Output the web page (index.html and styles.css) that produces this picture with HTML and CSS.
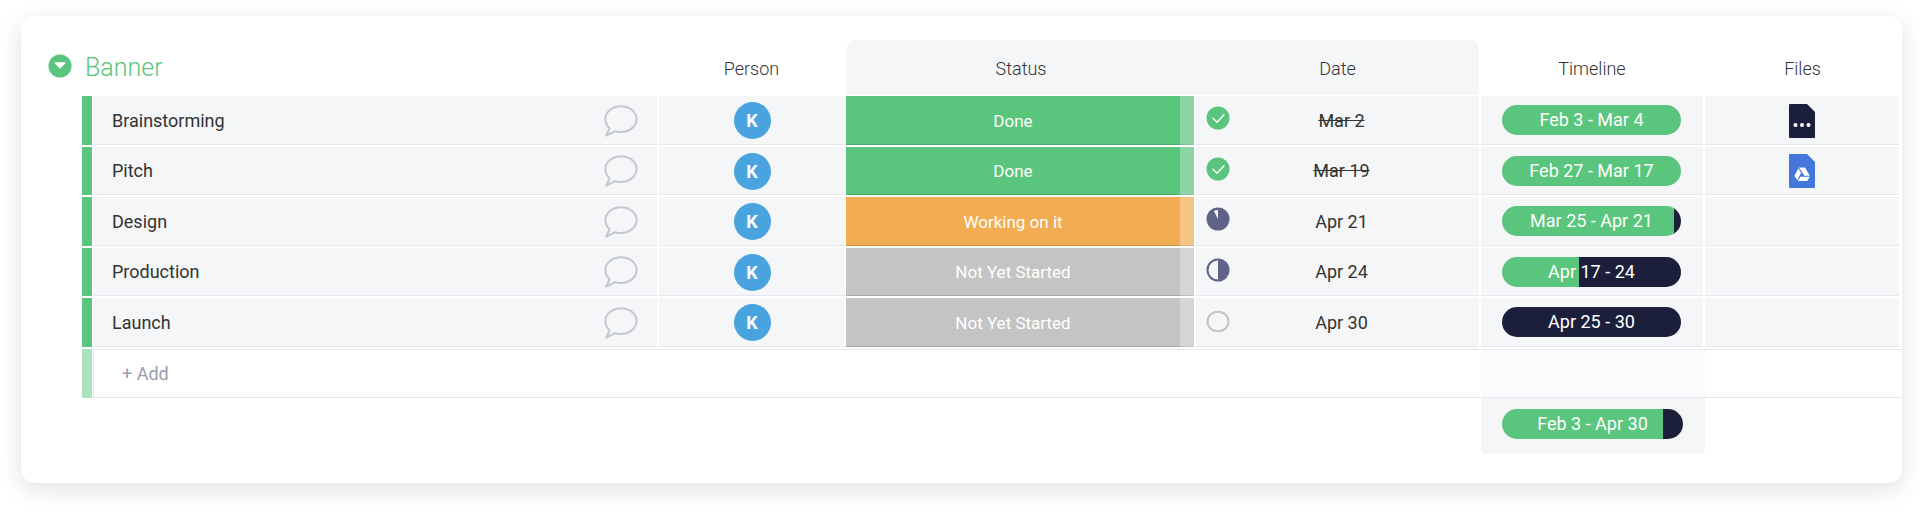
FILE: index.html
```html
<!DOCTYPE html>
<html lang="en">
<head>
    <meta charset="UTF-8">
    <meta name="viewport" content="width=device-width, initial-scale=1.0">
    <title>Banner</title>
    <link rel="stylesheet" href="styles.css">
</head>
<body>

    <!-- Shared icons -->
    <svg class="sprite" aria-hidden="true">
        <symbol id="comment" viewBox="0 0 34 32">
            <path d="M17 1.2C25.8 1.2 32.6 7 32.6 14S25.8 27 17 27c-2 0-4-.3-5.800-.9L2.200 30.500 5.600 23.200C2.800 20.700 1.400 17.500 1.400 14 1.400 7 8.200 1.200 17 1.200z" fill="none" stroke="#c5c7d0" stroke-width="2" stroke-linejoin="round"/>
        </symbol>
        <symbol id="check" viewBox="0 0 24 24">
            <circle cx="12" cy="12" r="11.500" fill="#5ac57d"/>
            <path d="M7 12.200l4 4 7-7.400" fill="none" stroke="#fff" stroke-width="1.500" stroke-linecap="round"/>
        </symbol>
    </svg>

    <div class="board">
        <table class="group">
            <colgroup>
                <col class="col-toggle">
                <col class="col-bar">
                <col class="col-name">
                <col class="col-person">
                <col class="col-status">
                <col class="col-date">
                <col class="col-timeline">
                <col class="col-files">
            </colgroup>

            <thead>
                <tr>
                    <td class="toggle-cell">
                        <button class="toggle" aria-label="Collapse group">
                            <svg width="24" height="24" viewBox="0 0 24 24"><circle cx="12" cy="12" r="11.500" fill="#5ac57d"/><path d="M7.300 9h9.400L12 13.700z" fill="#fff" stroke="#fff" stroke-width="1.400" stroke-linejoin="round"/></svg>
                        </button>
                    </td>
                    <th colspan="2" class="group-title">Banner</th>
                    <th>Person</th>
                    <th class="shade shade-left">Status</th>
                    <th class="shade shade-right">Date</th>
                    <th>Timeline</th>
                    <th>Files</th>
                </tr>
            </thead>

            <tbody>
                <tr class="item">
                    <td></td>
                    <td class="bar"></td>
                    <td class="cell"><div class="name">Brainstorming <button class="comment" aria-label="Comment"><svg width="34" height="32"><use href="#comment"/></svg></button></div></td>
                    <td class="cell person"><div class="avatar">K</div></td>
                    <td class="cell status done"><div class="label">Done</div></td>
                    <td class="cell"><div class="date"><svg width="24" height="24"><use href="#check"/></svg><s>Mar 2</s></div></td>
                    <td class="cell"><div class="pill" style="--done: 100%">Feb 3 - Mar 4</div></td>
                    <td class="cell files">
                        <a class="file" href="#" aria-label="File"><svg width="26" height="34" viewBox="0 0 26 34"><path d="M1 0h17l8 8v25a1 1 0 0 1-1 1H1a1 1 0 0 1-1-1V1a1 1 0 0 1 1-1z" fill="#1c1f3b"/><g fill="#fff"><circle cx="6.500" cy="21" r="2"/><circle cx="13" cy="21" r="2"/><circle cx="19.500" cy="21" r="2"/></g></svg></a>
                    </td>
                </tr>
                <tr class="item">
                    <td></td>
                    <td class="bar"></td>
                    <td class="cell"><div class="name">Pitch <button class="comment" aria-label="Comment"><svg width="34" height="32"><use href="#comment"/></svg></button></div></td>
                    <td class="cell person"><div class="avatar">K</div></td>
                    <td class="cell status done"><div class="label">Done</div></td>
                    <td class="cell"><div class="date"><svg width="24" height="24"><use href="#check"/></svg><s>Mar 19</s></div></td>
                    <td class="cell"><div class="pill" style="--done: 100%">Feb 27 - Mar 17</div></td>
                    <td class="cell files">
                        <a class="file" href="#" aria-label="Drive file"><svg width="26" height="34" viewBox="0 0 26 34"><path d="M1 0h17l8 8v25a1 1 0 0 1-1 1H1a1 1 0 0 1-1-1V1a1 1 0 0 1 1-1z" fill="#4377dc"/><g fill="#fff"><path d="M10 13.500h6l4.700 8.200h-5.300z"/><path d="M9.400 14.300l2.700 4.800-3.800 7L5.400 22z"/><path d="M11.300 22.700h9.500l-2.600 4.300H8.800z"/></g></svg></a>
                    </td>
                </tr>
                <tr class="item">
                    <td></td>
                    <td class="bar"></td>
                    <td class="cell"><div class="name">Design <button class="comment" aria-label="Comment"><svg width="34" height="32"><use href="#comment"/></svg></button></div></td>
                    <td class="cell person"><div class="avatar">K</div></td>
                    <td class="cell status working"><div class="label">Working on it</div></td>
                    <td class="cell"><div class="date"><svg width="24" height="24" viewBox="0 0 24 24"><circle cx="12" cy="12" r="11.500" fill="#5f6388"/><path d="M12 12V3c-1.600 0-3 .3-4.200.9z" fill="#f4f6f8"/></svg><span>Apr 21</span></div></td>
                    <td class="cell"><div class="pill" style="--done: 96%">Mar 25 - Apr 21</div></td>
                    <td class="cell files"></td>
                </tr>
                <tr class="item">
                    <td></td>
                    <td class="bar"></td>
                    <td class="cell"><div class="name">Production <button class="comment" aria-label="Comment"><svg width="34" height="32"><use href="#comment"/></svg></button></div></td>
                    <td class="cell person"><div class="avatar">K</div></td>
                    <td class="cell status waiting"><div class="label">Not Yet Started</div></td>
                    <td class="cell"><div class="date"><svg width="24" height="24" viewBox="0 0 24 24"><circle cx="12" cy="12" r="10.500" fill="none" stroke="#5f6388" stroke-width="2"/><path d="M12 2a10 10 0 0 1 0 20z" fill="#5f6388"/></svg><span>Apr 24</span></div></td>
                    <td class="cell"><div class="pill" style="--done: 43%">Apr 17 - 24</div></td>
                    <td class="cell files"></td>
                </tr>
                <tr class="item">
                    <td></td>
                    <td class="bar"></td>
                    <td class="cell"><div class="name">Launch <button class="comment" aria-label="Comment"><svg width="34" height="32"><use href="#comment"/></svg></button></div></td>
                    <td class="cell person"><div class="avatar">K</div></td>
                    <td class="cell status waiting"><div class="label">Not Yet Started</div></td>
                    <td class="cell"><div class="date"><svg width="24" height="24" viewBox="0 0 24 24"><ellipse cx="12" cy="13.500" rx="10.500" ry="9.800" fill="none" stroke="#c4c4c4" stroke-width="2"/></svg><span>Apr 30</span></div></td>
                    <td class="cell"><div class="pill" style="--done: 0%">Apr 25 - 30</div></td>
                    <td class="cell files"></td>
                </tr>
                <tr class="add">
                    <td></td>
                    <td class="bar"></td>
                    <td class="line line-start" colspan="4"><input type="text" class="add-input" placeholder="+ Add" aria-label="Add item"></td>
                    <td class="line tint"></td>
                    <td class="line"></td>
                </tr>
            </tbody>

            <!-- Summary of the whole group -->
            <tfoot>
                <tr>
                    <td colspan="6"></td>
                    <td class="total"><div class="pill" style="--done: 89%">Feb 3 - Apr 30</div></td>
                    <td></td>
                </tr>
            </tfoot>
        </table>
    </div>

</body>
</html>
```
FILE: styles.css
```css
body {
    margin: 0;
    padding: 16px 18px 32px 21px;
    background: #fff;
    color: #333;
    font-family: Roboto, sans-serif;
    font-size: 18px;
    line-height: 22px;
}

.sprite {
    display: none;
}

svg {
    display: block;
}

button {
    padding: 0;
    border: none;
    background: none;
    cursor: pointer;
}

.board {
    padding: 24px 0 29px 27px;
    background: #fff;
    border-radius: 14px;
    box-shadow: 0 6px 24px rgba(0, 0, 0, 0.12);
}

.group {
    width: 100%;
    table-layout: fixed;
    border-collapse: separate;
    border-spacing: 0;
}

.col-toggle { width: 34px; }
.col-bar { width: 11px; }
.col-person { width: 187px; }
.col-status { width: 350px; }
.col-date { width: 285px; }
.col-timeline { width: 224px; }
.col-files { width: 197px; }

td, th {
    padding: 0;
    box-sizing: border-box;
}

/* Header */
th {
    height: 56px;
    padding-top: 3px;
    border-bottom: 1px solid #fff;
    border-right: 2px solid #fff;
    font-weight: 300;
}

.group-title {
    padding: 0 0 0 3px;
    color: #5ac57d;
    font-size: 25px;
    text-align: left;
}

.shade {
    background: #f4f6f8;
}

.shade-left {
    border-right: none;
    border-top-left-radius: 10px;
}

.shade-right {
    border-top-right-radius: 10px;
}

/* Items */
.item td {
    height: 50px;
}

.item:nth-child(odd) td {
    height: 51px;
}

.bar {
    background: #5ac57d;
    border-right: 1px solid #fff;
    border-bottom: 2px solid #fff;
}

.cell {
    background: #f4f6f8;
    border-right: 2px solid #fff;
    border-bottom: 2px solid #fff;
    box-shadow: inset 0 -1px #e4e7ec;
}

.person {
    border-right-width: 1px;
}

.files {
    border-right-width: 3px;
}

.name {
    display: flex;
    align-items: center;
    justify-content: space-between;
    padding: 0 19px;
}

.avatar {
    width: 37px;
    margin: auto;
    border-radius: 50%;
    background: #49a3df;
    color: #fff;
    font-weight: 700;
    line-height: 37px;
    text-align: center;
}

.status {
    color: #fff;
    font-size: 17px;
    text-align: center;
    box-shadow: inset 0 -1px rgba(0, 0, 0, 0.15);
}

.label {
    display: flex;
    align-items: center;
    justify-content: center;
    height: 100%;
    border-right: 14px solid rgba(255, 255, 255, 0.3);
}

.done { background: #5ac57d; }
.working { background: #f2ac52; }
.waiting { background: #c4c4c4; }

.date {
    display: flex;
    align-items: center;
    padding: 0 26px 0 10px;
    text-align: center;
}

.date svg {
    margin-bottom: 5px;
}

.date s,
.date span {
    flex: 1;
}

.pill {
    height: 30px;
    margin: 0 22px 0 21px;
    border-radius: 15px;
    background: linear-gradient(to right, #5ac57d var(--done), #1c1f3b var(--done));
    color: #fff;
    line-height: 30px;
    text-align: center;
}

.cell .pill {
    margin-bottom: 1px;
}

.file {
    display: block;
    width: 26px;
    margin: auto;
}

/* Add row */
.add td {
    height: 49px;
}

.add .bar {
    background: #abe3bf;
    border-bottom: none;
}

.line {
    border-top: 1px solid #e4e8ee;
    border-bottom: 1px solid #e4e8ee;
}

.line-start {
    border-left: 1px solid #e4e8ee;
}

.tint {
    background: #fafbfd;
}

.add-input {
    width: 100%;
    box-sizing: border-box;
    padding: 0 28px;
    border: none;
    outline: none;
    background: none;
    color: #333;
    font: inherit;
}

.add-input::placeholder {
    color: #9a9cab;
}

.total {
    height: 56px;
    padding-bottom: 4px;
    background: #f4f6f8;
    border-radius: 0 0 5px 5px;
}
```
